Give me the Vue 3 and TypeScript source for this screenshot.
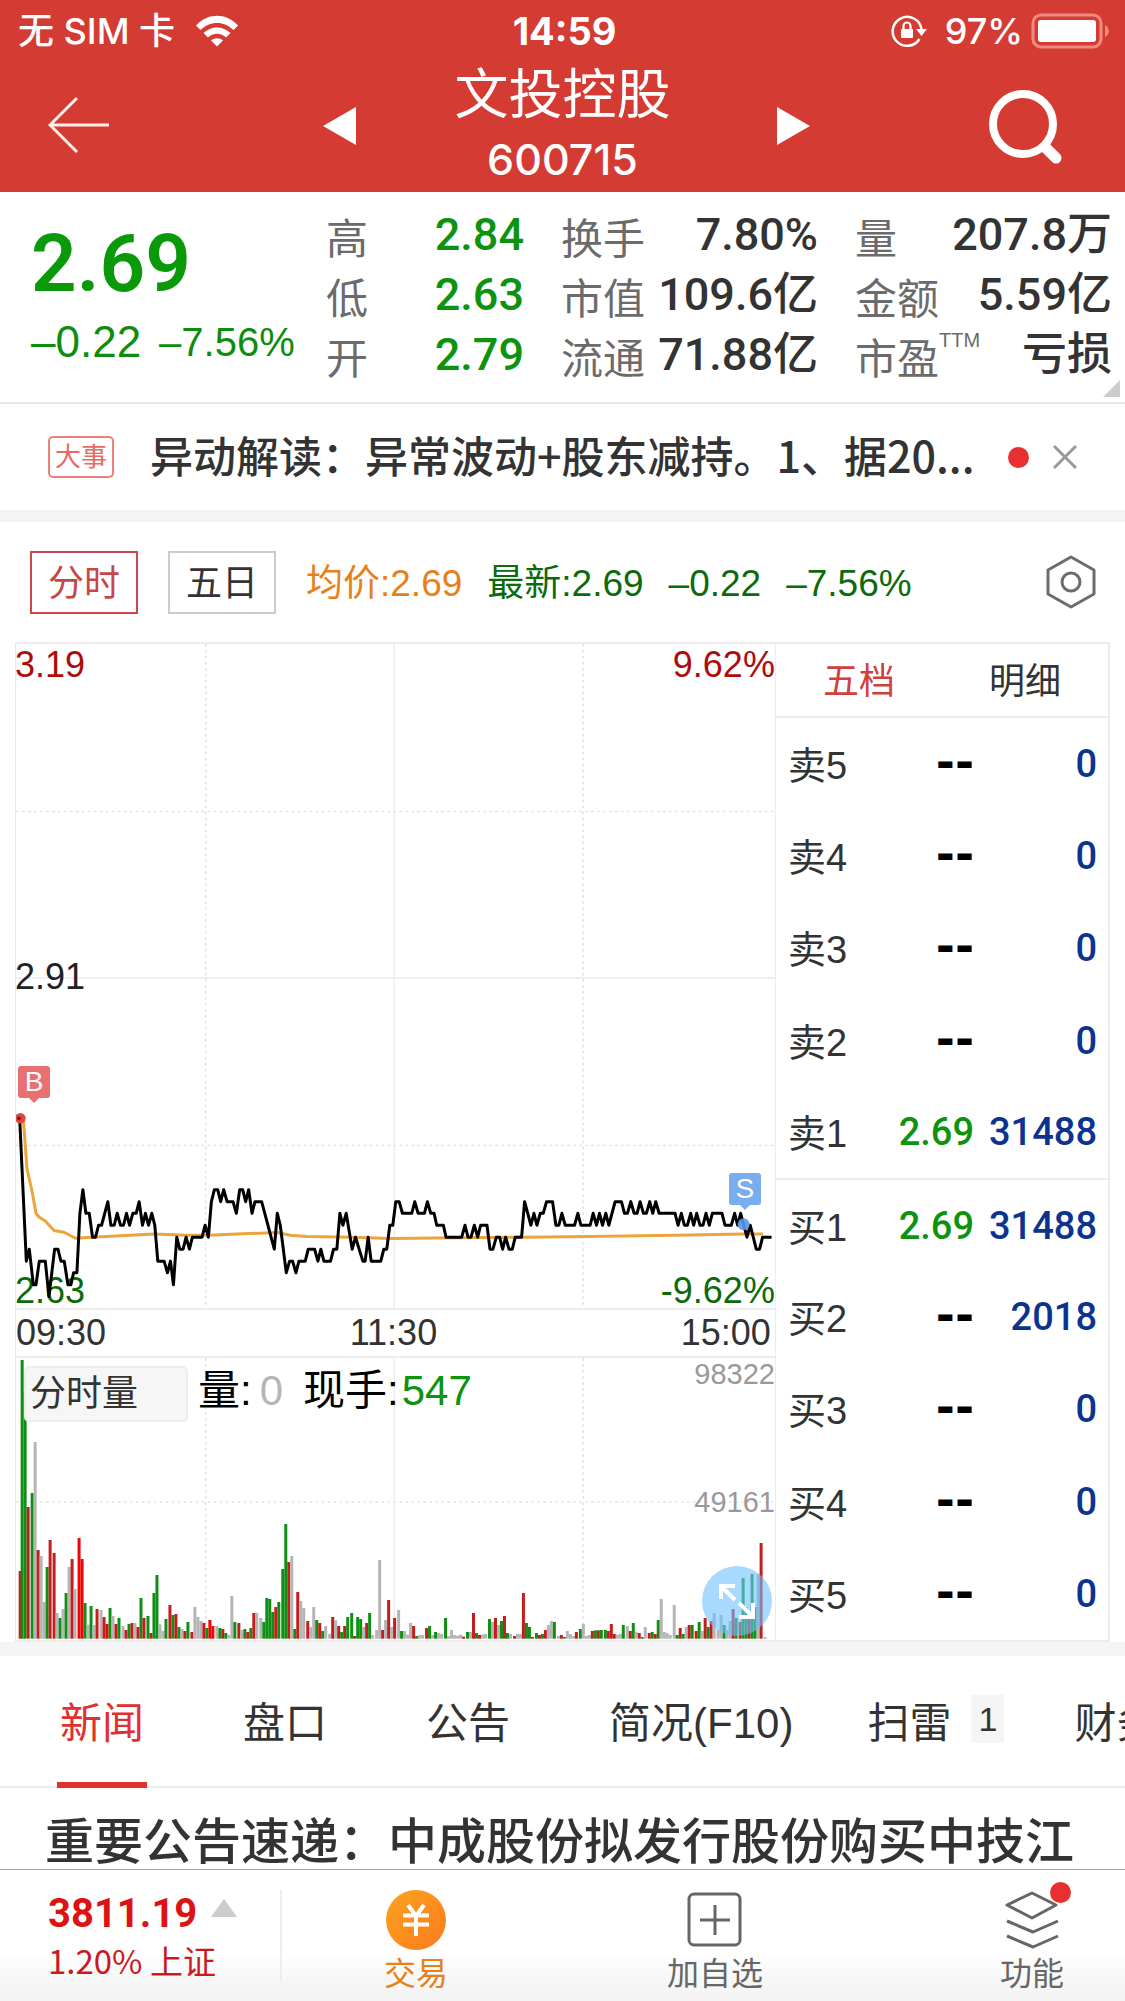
<script setup lang="ts">
import { computed, ref } from 'vue'

interface Stat {
  label: string
  value: string
  note?: string
  down?: boolean
}

interface Level {
  label: string
  price: string
  volume: string
}

interface Bar {
  x: number
  height: number
  kind: string
}

const statColumns: Stat[][] = [
  [
    { label: '高', value: '2.84', down: true },
    { label: '低', value: '2.63', down: true },
    { label: '开', value: '2.79', down: true },
  ],
  [
    { label: '换手', value: '7.80%' },
    { label: '市值', value: '109.6亿' },
    { label: '流通', value: '71.88亿' },
  ],
  [
    { label: '量', value: '207.8万' },
    { label: '金额', value: '5.59亿' },
    { label: '市盈', value: '亏损', note: 'TTM' },
  ],
]

const sells: Level[] = [
  { label: '卖5', price: '--', volume: '0' },
  { label: '卖4', price: '--', volume: '0' },
  { label: '卖3', price: '--', volume: '0' },
  { label: '卖2', price: '--', volume: '0' },
  { label: '卖1', price: '2.69', volume: '31488' },
]

const buys: Level[] = [
  { label: '买1', price: '2.69', volume: '31488' },
  { label: '买2', price: '--', volume: '2018' },
  { label: '买3', price: '--', volume: '0' },
  { label: '买4', price: '--', volume: '0' },
  { label: '买5', price: '--', volume: '0' },
]

const infoTabs = [
  { label: '新闻' },
  { label: '盘口' },
  { label: '公告' },
  { label: '简况(F10)' },
  { label: '扫雷', badge: '1' },
  { label: '财务' },
]
const activeTab = ref('新闻')

// Price turning points: position on the time axis, then the price in cents above 2.00.
const priceData =
  '11:79 31:67 40:68 52:65 60:65 70:67 88:67 99:64 116:68 126:68 135:67 145:67 156:65 165:65 173:66 183:66 192:71 201:73 210:71 220:71 230:69 239:69 248:70 257:70 276:72 285:70 295:70 304:71 314:70 323:70 332:71 341:70 351:71 361:71 370:72 380:70 389:71 398:70 408:71 417:70 426:67 445:67 455:66 464:67 473:65 483:69 492:68 502:68 511:69 521:68 530:69 559:69 568:70 578:69 587:72 596:73 606:73 615:72 624:73 634:72 652:72 662:71 672:73 681:73 690:72 699:73 709:71 718:72 738:72 776:68 785:71 794:70 812:66 822:67 831:67 841:66 850:67 869:67 878:68 897:68 907:67 916:68 925:67 945:67 954:68 964:68 973:71 982:70 992:71 1010:68 1020:69 1042:67 1049:67 1058:69 1067:67 1096:67 1105:68 1114:68 1123:70 1132:70 ' +
  '1141:72 1151:72 1161:71 1189:71 1198:72 1208:71 1227:71 1236:72 1246:71 1256:71 1264:70 1284:70 1292:69 1339:69 1349:70 1358:69 1367:69 1377:70 1387:69 1396:70 1415:70 1424:68 1433:68 1443:69 1453:69 1462:68 1471:69 1481:68 1491:68 1500:69 1519:69 1528:72 1547:70 1556:71 1565:70 1575:71 1584:71 1594:72 1612:72 1622:70 1631:70 1640:71 1650:70 1678:70 1688:71 1697:70 1725:70 1734:71 1744:70 1753:71 1762:70 1772:71 1781:70 1800:72 1819:72 1828:71 1837:71 1847:72 1857:71 1866:71 1875:72 1885:71 1894:71 1904:72 1913:71 1922:72 1932:71 1980:71 1989:70 1999:71 2008:70 2017:70 2027:71 2036:70 2045:71 2055:70 2064:70 2073:71 2083:70 2092:71 2121:71 2130:70 2149:70 2159:71 2168:70 2177:71 2196:69 2206:70 2224:68 2234:68 2243:69 2270:69'

const averageLine =
  '22,1430 33,1579 48,1646 60,1713 69,1724 88,1736 114,1765 144,1770 179,1788 214,1786 414,1775 514,1779 594,1778 784,1771 824,1779 874,1783 1014,1785 1124,1789 1524,1785 1724,1783 2024,1778 2184,1775 2244,1775'

// Minute volumes: position, direction (g falling, r rising, R strong rise, n flat), height.
const volumeData =
  '8r203 14g836 23g737 32r395 44g437 53n590 62r266 71n248 80n110 89g215 98r296 110r257 119n77 128g62 137n89 146g137 155n215 164r239 173n149 185R302 194R239 203g107 212n42 221g98 230n41 239r89 251n86 260r65 269R44 278g92 287n68 296r44 305g62 317n38 326r26 335g44 344r47 353n47 362r35 371g122 380r62 392g68 401r17 410g137 419g191 428n43 437n23 446g59 458r101 467g71 476r74 485g35 494n29 503r23 512g50 524r20 533n95 542n65 551n53 560r47 569g32 578R56 587R38 599n38 608g32 617r29 626g17 635n11 644n128 653g50 665r47 674n26 683g29 692r20 701g32 710r77 719n77 731n62 740g50 749g122 758g119 767g80 776r95 785g110 797g209 806g344 815r230 824n248 833g29 842r140 851n113 860n92 872r53 881n35 890n95 899g56 908r47 917g23 926n38 938n14 947r65 956n55 965r38 974g20 983r38 992g65 1004g77 1013r8 1022g65 1031g59 1040n35 1049r47 1058g77 1067n11 1079n26 1088n236 1097r26 1106n56 1115r116 1124n35 1133r62 1145n86 ' +
  '1154g23 1163n23 1172n12 1181n47 1190r38 1199g8 1208n11 1217n11 1229r32 1238g38 1247n11 1256g20 1265n17 1274n14 1286g62 1295n8 1304n26 1313n11 1322n9 1331n12 1340r6 1352g20 1361n20 1370r77 1379g17 1388r11 1397n12 1406n14 1418g59 1427n50 1436r62 1445n41 1454g53 1463r68 1472g17 1481n14 1493r8 1502n14 1511n14 1520r137 1529g47 1538g35 1547r5 1559g17 1568r11 1577g14 1586r26 1595n41 1604n53 1613g50 1625n8 1634r11 1643g5 1652n23 1661n14 1670n8 1679r20 1691g29 1700n44 1709n8 1718n11 1727r23 1736g25 1745r25 1754g26 1766g26 1775r23 1784r44 1793r14 1802n12 1811n14 1820g41 1832n38 1841r23 1850g47 1859n20 1868r17 1877g5 1886n35 1898r17 1907g20 1916r14 1925g56 1934n119 1943n20 1952n17 1961n11 1973n101 1982g11 1991r32 2000g14 2009n35 2018r41 2027g41 2039r23 2048g50 2057n23 2066r62 2075g35 2084r53 2093n77 2105n26 2114n71 2123g41 2132n26 2141n53 2150r89 2159g62 2171r50 2180g182 2189g95 2198r62 2207g194 2216g95 2225n194 2234r287 2246n5'

const pricePoints = computed(() =>
  priceData
    .split(' ')
    .map((pair) => {
      const [x, cents] = pair.split(':').map(Number)
      return `${x},${Math.round(1785 - (cents - 69) * 35.8)}`
    })
    .join(' '),
)

const bars = computed<Bar[]>(() =>
  volumeData.split(' ').map((entry) => {
    const match = /^(\d+)([grnR])(\d+)$/.exec(entry)!
    return { x: Number(match[1]), kind: match[2], height: Number(match[3]) }
  }),
)

const barColors: Record<string, string> = { g: '#0f9014', r: '#c51d1d', R: '#ee0606', n: '#b5b5b5' }
</script>

<template>
  <div class="app">
    <header class="top">
      <div class="status">
        <div class="status-side">
          <span class="carrier">无 SIM 卡</span>
          <svg class="wifi" viewBox="0 0 44 32" width="44" height="32" aria-hidden="true">
            <path d="M1 10.500C13-2.500 31-2.500 43 10.500L38.500 15C29 5.500 15 5.500 5.500 15Z" />
            <path d="M8.500 18C16 10.500 28 10.500 35.500 18L31 22.500C26 17.500 18 17.500 13 22.500Z" />
            <path d="M16 25.500C19.500 22.500 24.500 22.500 28 25.500L22 31.500Z" />
          </svg>
        </div>
        <span class="clock">14:59</span>
        <div class="status-side end">
          <svg viewBox="0 0 36 34" width="36" height="34" aria-hidden="true">
            <path d="M28.500 25A14.500 14.500 0 1 1 30.500 15" fill="none" stroke="#fff" stroke-width="2.500" />
            <path d="M25 15h11l-5.500 7z" fill="#fff" />
            <rect x="10" y="15" width="12" height="9" rx="1" fill="#fff" />
            <path d="M12.500 16v-4a3.500 3.500 0 0 1 7 0v4" fill="none" stroke="#fff" stroke-width="2.200" />
          </svg>
          <span class="percent">97%</span>
          <svg viewBox="0 0 80 36" width="80" height="36" aria-hidden="true">
            <rect x="2" y="2" width="68" height="32" rx="8" fill="none" stroke="#f08a80" stroke-width="3" />
            <rect x="7" y="7" width="58" height="22" rx="3" fill="#fff" />
            <path d="M74 12c5 2 5 10 0 12z" fill="#f08a80" />
          </svg>
        </div>
      </div>
      <nav class="nav">
        <div class="nav-left">
          <button class="icon" aria-label="返回">
            <svg viewBox="0 0 62 58" width="62" height="58">
              <path d="M61 29H3M29 2 2 29 29 56" fill="none" stroke="#fff0ec" stroke-width="3" />
            </svg>
          </button>
        </div>
        <button class="icon" aria-label="上一只">
          <svg viewBox="0 0 46 40" width="46" height="40"><path d="M8 20 41 1v38z" fill="#fff" /></svg>
        </button>
        <h1 class="title">
          <span class="name">文投控股</span>
          <span class="code">600715</span>
        </h1>
        <button class="icon" aria-label="下一只">
          <svg viewBox="0 0 46 40" width="46" height="40"><path d="M45 20 12 1v38z" fill="#fff" /></svg>
        </button>
        <div class="nav-right">
          <button class="icon" aria-label="搜索">
            <svg viewBox="0 0 74 76" width="74" height="76">
              <circle cx="34" cy="35" r="30" fill="none" stroke="#fff" stroke-width="8" />
              <path d="M56 58 67 69" stroke="#fff" stroke-width="11" stroke-linecap="round" />
            </svg>
          </button>
        </div>
      </nav>
    </header>

    <section class="quote">
      <div class="last">
        <strong class="last-price">2.69</strong>
        <p class="change"><span class="diff">–0.22</span><span class="rate">–7.56%</span></p>
      </div>
      <dl v-for="(column, i) in statColumns" :key="i" class="stats" :class="{ narrow: i === 0 }">
        <div v-for="stat in column" :key="stat.label" class="stat">
          <dt>{{ stat.label }}<sup v-if="stat.note">{{ stat.note }}</sup></dt>
          <dd :class="{ down: stat.down }">{{ stat.value }}</dd>
        </div>
      </dl>
      <i class="corner"></i>
    </section>

    <section class="notice">
      <span class="tag">大事</span>
      <a class="notice-text" href="#notice">异动解读：异常波动+股东减持。1、据20...</a>
      <i class="dot"></i>
      <button class="icon" aria-label="关闭">
        <svg viewBox="0 0 24 24" width="24" height="24">
          <path d="M1 1 23 23M23 1 1 23" stroke="#999" stroke-width="3" />
        </svg>
      </button>
    </section>

    <section class="period">
      <button class="period-btn active">分时</button>
      <button class="period-btn">五日</button>
      <p class="summary">
        <span class="avg">均价:2.69</span>
        <span>最新:2.69</span>
        <span>–0.22</span>
        <span>–7.56%</span>
      </p>
      <button class="icon settings" aria-label="设置">
        <svg viewBox="0 0 52 56" width="52" height="56">
          <path d="M26 3 49 16V40L26 53 3 40V16Z" fill="none" stroke="#6c6c6c" stroke-width="3" stroke-linejoin="round" />
          <circle cx="26" cy="28" r="9" fill="none" stroke="#6c6c6c" stroke-width="3" />
        </svg>
      </button>
    </section>

    <main class="market">
      <div class="charts">
        <div class="price-chart">
          <svg class="plot" viewBox="0 0 2280 1998" preserveAspectRatio="none" role="img" aria-label="分时走势">
            <g class="grid-dotted">
              <path d="M0 504H2280M0 1509H2280M570 0V1998M1704 0V1998" />
            </g>
            <g class="grid-solid">
              <path d="M0 1005H2280M1136 0V1998" />
            </g>
          </svg>
          <span class="label top-left">3.19</span>
          <span class="label top-right">9.62%</span>
          <span class="label middle">2.91</span>
          <span class="label bottom-left">2.63</span>
          <span class="label bottom-right">-9.62%</span>
          <svg class="plot" viewBox="0 0 2280 1998" preserveAspectRatio="none" aria-hidden="true">
            <polyline :points="averageLine" fill="none" stroke="#eba53a" stroke-width="9" stroke-linejoin="round" />
            <polyline :points="pricePoints" fill="none" stroke="#000" stroke-width="9" stroke-linejoin="round" />
            <circle cx="13" cy="1427" r="16" fill="#e0453f" />
            <circle cx="9" cy="1427" r="5" fill="#5c1010" />
            <circle cx="2186" cy="1746" r="18" fill="#5b97ea" fill-opacity="0.9" />
          </svg>
          <span class="pin buy">B</span>
          <span class="pin sell">S</span>
        </div>
        <div class="times"><span>09:30</span><span>11:30</span><span>15:00</span></div>
        <div class="volume-chart">
          <svg class="plot" viewBox="0 0 2280 846" preserveAspectRatio="none" role="img" aria-label="分时量">
            <g class="grid-dotted"><path d="M0 432H2280M570 0V846M1704 0V846" /></g>
            <g class="grid-solid"><path d="M1136 0V846" /></g>
            <rect
              v-for="bar in bars"
              :key="bar.x"
              :x="bar.x"
              :y="842 - bar.height"
              width="9"
              :height="bar.height"
              :fill="barColors[bar.kind]"
            />
          </svg>
          <div class="volume-head">
            <button class="volume-kind">分时量</button>
            <span>量:<b class="flat">0</b></span>
            <span>现手:<b class="current">547</b></span>
          </div>
          <span class="scale scale-top">98322</span>
          <span class="scale scale-mid">49161</span>
          <button class="expand" aria-label="展开">
            <svg viewBox="0 0 70 70" width="70" height="70">
              <path d="M19 33V20H33M20 21 33 34M51 37V51H37M50 50 37 37" fill="none" stroke="#fff" stroke-width="4" />
            </svg>
          </button>
        </div>
      </div>

      <aside class="book">
        <div class="book-tabs">
          <button class="book-tab active">五档</button>
          <button class="book-tab">明细</button>
        </div>
        <table class="levels">
          <tbody>
            <tr v-for="row in sells" :key="row.label">
              <th scope="row">{{ row.label }}</th>
              <td :class="row.price === '--' ? 'none' : 'down'">{{ row.price }}</td>
              <td class="qty">{{ row.volume }}</td>
            </tr>
          </tbody>
          <tbody class="buys">
            <tr v-for="row in buys" :key="row.label">
              <th scope="row">{{ row.label }}</th>
              <td :class="row.price === '--' ? 'none' : 'down'">{{ row.price }}</td>
              <td class="qty">{{ row.volume }}</td>
            </tr>
          </tbody>
        </table>
      </aside>
    </main>

    <nav class="info-tabs">
      <button
        v-for="tab in infoTabs"
        :key="tab.label"
        class="info-tab"
        :class="{ active: tab.label === activeTab }"
        @click="activeTab = tab.label"
      >
        {{ tab.label }}<span v-if="tab.badge" class="badge">{{ tab.badge }}</span>
      </button>
    </nav>

    <a class="headline" href="#news">重要公告速递：中成股份拟发行股份购买中技江</a>

    <footer class="bottom">
      <div class="index">
        <p class="index-value">3811.19<i class="up"></i></p>
        <p class="index-rate">1.20% 上证</p>
      </div>
      <div class="actions">
        <button class="action trade">
          <svg viewBox="0 0 60 60" width="60" height="60">
            <defs>
              <linearGradient id="coin" x1="0" y1="0" x2="1" y2="1">
                <stop offset="0" stop-color="#fca321" />
                <stop offset="1" stop-color="#fb7a1c" />
              </linearGradient>
            </defs>
            <circle cx="30" cy="30" r="30" fill="url(#coin)" />
            <path d="M22 15 30 26 38 15M17 25.500H43M17 34.500H43M30 26V46" fill="none" stroke="#fff" stroke-width="4" />
          </svg>
          交易
        </button>
        <button class="action add">
          <svg viewBox="0 0 60 60" width="60" height="60">
            <rect x="4" y="4" width="51" height="51" rx="5" fill="none" stroke="#666" stroke-width="3" />
            <path d="M15 30H45M30 15V45" stroke="#666" stroke-width="3" />
          </svg>
          加自选
        </button>
        <button class="action">
          <svg viewBox="0 0 60 60" width="60" height="60">
            <g fill="none" stroke="#666" stroke-width="3" stroke-linejoin="round">
              <path d="M30 3 54 15 30 28 5 15Z" />
              <path d="M5 31 31 42 56 31M5 46 31 57 56 46" />
            </g>
          </svg>
          功能
          <i class="dot alert"></i>
        </button>
      </div>
    </footer>
  </div>
</template>

<style>
body {
  margin: 0;
  background: #fff;
}
</style>

<style scoped>
.app {
  overflow: hidden;
  background: #fff;
  color: #333;
  font-family: 'Liberation Sans', 'Noto Sans CJK SC', sans-serif;
}

.app * {
  box-sizing: border-box;
}

button {
  margin: 0;
  padding: 0;
  border: 0;
  background: none;
  color: inherit;
  font: inherit;
}

a {
  color: inherit;
  text-decoration: none;
}

p,
dl,
dd,
h1 {
  margin: 0;
}

svg {
  display: block;
}

.icon {
  flex: none;
}

/* Header */
.top {
  height: 192px;
  background: #d43c33;
  color: #fff;
}

.status {
  display: grid;
  grid-template-columns: 1fr auto 1fr;
  align-items: center;
  height: 62px;
  padding: 0 14px 0 18px;
  font: 500 36px/40px Inter, 'Noto Sans CJK SC', sans-serif;
}

.status-side {
  display: flex;
  align-items: center;
  gap: 20px;
}

.status-side.end {
  justify-content: flex-end;
  gap: 8px;
}

.wifi {
  fill: #fff;
}

.clock {
  font-size: 38px;
  font-weight: 700;
}

.percent {
  padding-left: 10px;
}

.nav {
  display: grid;
  grid-template-columns: minmax(0, 1fr) auto auto auto minmax(0, 1fr);
  align-items: center;
  gap: 94px;
  height: 128px;
}

.nav-left {
  padding: 2px 0 0 48px;
}

.nav-right {
  display: flex;
  justify-content: flex-end;
  padding: 2px 62px 0 0;
}

.title {
  display: flex;
  flex-direction: column;
  gap: 2px;
  align-items: center;
  font-weight: 400;
}

.name {
  font-size: 54px;
  line-height: 64px;
  white-space: nowrap;
}

.code {
  font: 500 43px/60px Inter, sans-serif;
}

/* Quote */
.quote {
  position: relative;
  display: flex;
  gap: 37px;
  padding: 14px 13px 16px 31px;
  border-bottom: 2px solid #e8e8e8;
}

.last {
  flex: 1;
  min-width: 0;
  color: #099909;
}

.last-price {
  display: block;
  padding-top: 4px;
  font: 600 80px/108px Roboto, sans-serif;
}

.change {
  display: flex;
  align-items: center;
  gap: 18px;
  line-height: 48px;
  white-space: nowrap;
  color: #0d8d0d;
}

.diff {
  font-size: 44px;
}

.rate {
  font-size: 40px;
}

.stats {
  width: 257px;
}

.stats.narrow {
  width: 198px;
}

.stat {
  display: flex;
  justify-content: space-between;
  height: 60px;
  white-space: nowrap;
}

.stat dt {
  display: flex;
  color: #6b6b6b;
  font: 400 42px/60px 'Noto Sans CJK SC', sans-serif;
}

.stat sup {
  font: 20px/28px 'Liberation Sans', sans-serif;
}

.stat dd {
  font: 500 45px/58px Roboto, 'Noto Sans CJK SC', sans-serif;
}

.down,
.stat dd.down {
  color: #0d930d;
}

.corner {
  position: absolute;
  right: 5px;
  bottom: 5px;
  border-bottom: 17px solid #ccc;
  border-left: 17px solid transparent;
}

/* Notice */
.notice {
  display: flex;
  align-items: center;
  height: 118px;
  padding: 0 48px;
  border-bottom: 12px solid #f5f5f5;
}

.tag {
  width: 66px;
  border: 2px solid #ee8078;
  border-radius: 5px;
  color: #e86a61;
  font-size: 26px;
  line-height: 38px;
  text-align: center;
}

.notice-text {
  flex: 1;
  min-width: 0;
  margin-left: 36px;
  padding-bottom: 6px;
  overflow: hidden;
  font: 500 43px/60px 'Noto Sans CJK SC', sans-serif;
  white-space: nowrap;
}

.dot {
  flex: none;
  width: 21px;
  height: 21px;
  border-radius: 50%;
  background: #e93030;
}

.notice .icon {
  margin-left: 24px;
}

/* Period row */
.period {
  display: flex;
  align-items: center;
  height: 120px;
  padding: 0 28px 0 30px;
  font-size: 36px;
}

.period-btn {
  flex: none;
  width: 108px;
  height: 63px;
  margin-right: 30px;
  padding-bottom: 4px;
  border: 2px solid #ccc;
}

.period-btn.active {
  border-color: #d0474a;
  color: #c94545;
}

.summary {
  display: flex;
  flex: 1;
  gap: 25px;
  align-items: baseline;
  padding-bottom: 5px;
  font-size: 37px;
  white-space: nowrap;
  color: #0b6b0b;
}

.avg {
  color: #e8801a;
}

/* Chart and order book */
.market {
  display: flex;
  padding: 0 15px;
  border-bottom: 14px solid #f5f5f5;
}

.charts {
  flex: 761 1 0;
  min-width: 0;
  border-left: 1px solid #e9e9e9;
  border-bottom: 2px solid #eee;
}

.price-chart {
  position: relative;
  height: 668px;
  border-top: 2px solid #ececec;
  border-bottom: 2px solid #ececec;
}

.plot {
  position: absolute;
  inset: 0;
  width: 100%;
  height: 100%;
}

.grid-dotted {
  fill: none;
  stroke: #e3e3e3;
  stroke-width: 5;
  stroke-dasharray: 8 10;
}

.grid-solid {
  fill: none;
  stroke: #ececec;
  stroke-width: 4;
}

.label {
  position: absolute;
  left: -1px;
  color: #0b6b0b;
  font-size: 36px;
  line-height: 40px;
}

.top-left,
.top-right {
  top: 1px;
  color: #b00b0b;
}

.middle {
  top: 313px;
  color: #222;
}

.bottom-left,
.bottom-right {
  bottom: -3px;
}

.top-right,
.bottom-right {
  right: 0;
  left: auto;
}

.pin {
  position: absolute;
  width: 32px;
  height: 32px;
  border-radius: 3px;
  color: #fff;
  font-size: 28px;
  line-height: 32px;
  text-align: center;
}

.pin::after {
  position: absolute;
  top: 31px;
  left: 10px;
  border: 6px solid transparent;
  border-top-color: inherit;
  border-bottom: 0;
  content: '';
}

.buy {
  top: 422px;
  left: 2px;
  border-color: #e97070;
  background: #e97070;
}

.sell {
  top: 529px;
  right: 14px;
  border-color: #78adef;
  background: #78adef;
}

.times {
  display: flex;
  justify-content: space-between;
  padding-right: 4px;
  font-size: 36px;
  line-height: 46px;
}

.volume-chart {
  position: relative;
  height: 284px;
  border-top: 2px solid #ececec;
}

.volume-head {
  position: relative;
  display: flex;
  gap: 20px;
  align-items: flex-start;
  padding: 8px 0 0 8px;
  color: #000;
  font-size: 42px;
  line-height: 50px;
  white-space: nowrap;
}

.volume-kind {
  width: 164px;
  height: 56px;
  margin-right: -10px;
  padding-left: 4px;
  border: 2px solid #ededed;
  border-radius: 5px;
  background: #f6f6f6;
  color: #333;
  font-size: 36px;
  line-height: 50px;
  text-align: left;
}

.volume-head b {
  font-weight: 400;
}

.flat {
  margin-left: 8px;
  color: #b5b5b5;
}

.current {
  margin-left: 3px;
  color: #0d930d;
}

.scale {
  position: absolute;
  right: 0;
  color: #999;
  font-size: 29px;
  line-height: 32px;
}

.scale-top {
  top: 0;
}

.scale-mid {
  top: 128px;
}

.expand {
  position: absolute;
  right: 3px;
  bottom: 4px;
  border-radius: 50%;
  background: rgba(110, 192, 253, 0.6);
}

.book {
  display: flex;
  flex: 333 1 0;
  flex-direction: column;
  min-width: 0;
  border: 2px solid #ececec;
  border-left-width: 1px;
}

.book-tabs {
  display: flex;
  flex: none;
  height: 74px;
  border-bottom: 2px solid #ececec;
}

.book-tab {
  flex: 1;
  padding-bottom: 4px;
  font-size: 36px;
}

.book-tab.active {
  color: #d0403c;
}

.levels {
  flex: 1;
  width: 100%;
  border-collapse: collapse;
}

.levels tr {
  height: 92px;
}

.levels th {
  padding: 0 0 3px 12px;
  font-size: 38px;
  font-weight: 400;
  text-align: left;
}

.levels td {
  padding: 0;
  font: 500 38px/50px Roboto, sans-serif;
  text-align: right;
}

.levels td.none {
  padding-bottom: 4px;
  color: #000;
  font: 700 46px/50px 'DejaVu Sans', sans-serif;
}

.levels .qty {
  width: 134px;
  padding-right: 11px;
  color: #0c3390;
}

.buys {
  border-top: 2px solid #eee;
}

/* Information tabs */
.info-tabs {
  display: flex;
  height: 132px;
  padding-left: 57px;
  border-bottom: 2px solid #ececec;
  font-size: 42px;
  white-space: nowrap;
}

.info-tab {
  display: flex;
  flex: none;
  gap: 20px;
  align-items: center;
  height: 132px;
  margin-right: 93px;
  padding: 0 3px;
  border-bottom: 6px solid transparent;
}

.info-tab.active {
  border-color: #e03030;
  color: #e03030;
}

.info-tab:nth-child(4) {
  margin-right: 68px;
}

.info-tab:nth-child(5) {
  margin-right: 64px;
}

.badge {
  width: 33px;
  background: #f5f5f5;
  font-size: 34px;
  line-height: 48px;
  text-align: center;
}

.headline {
  display: block;
  padding: 18px 0 0 45px;
  border-bottom: 1px solid #aaa;
  font: 500 49px/63px 'Noto Sans CJK SC', sans-serif;
  white-space: nowrap;
}

/* Bottom bar */
.bottom {
  display: flex;
  align-items: center;
  height: 132px;
  background: linear-gradient(#fff 60%, #f2f2f2);
}

.index {
  flex: none;
  width: 282px;
  padding-left: 48px;
  border-right: 2px solid #eee;
  white-space: nowrap;
}

.index-value {
  display: flex;
  align-items: center;
  gap: 14px;
  color: #dd1212;
  font: 700 40px/48px Roboto, sans-serif;
}

.up {
  margin-bottom: 12px;
  border-right: 13px solid transparent;
  border-bottom: 18px solid #ccc;
  border-left: 13px solid transparent;
}

.index-rate {
  color: #c91a1f;
  font: 400 33px/44px 'Noto Sans CJK SC', sans-serif;
}

.actions {
  display: flex;
  flex: 1;
  justify-content: space-between;
  padding: 11px 61px 0 102px;
}

.action {
  position: relative;
  display: flex;
  flex-direction: column;
  gap: 4px;
  align-items: center;
  color: #666;
  font-size: 32px;
  line-height: 40px;
}

.add {
  margin-right: 18px;
}

.trade {
  color: #e8801a;
}

.alert {
  position: absolute;
  top: -8px;
  right: -7px;
}
</style>
